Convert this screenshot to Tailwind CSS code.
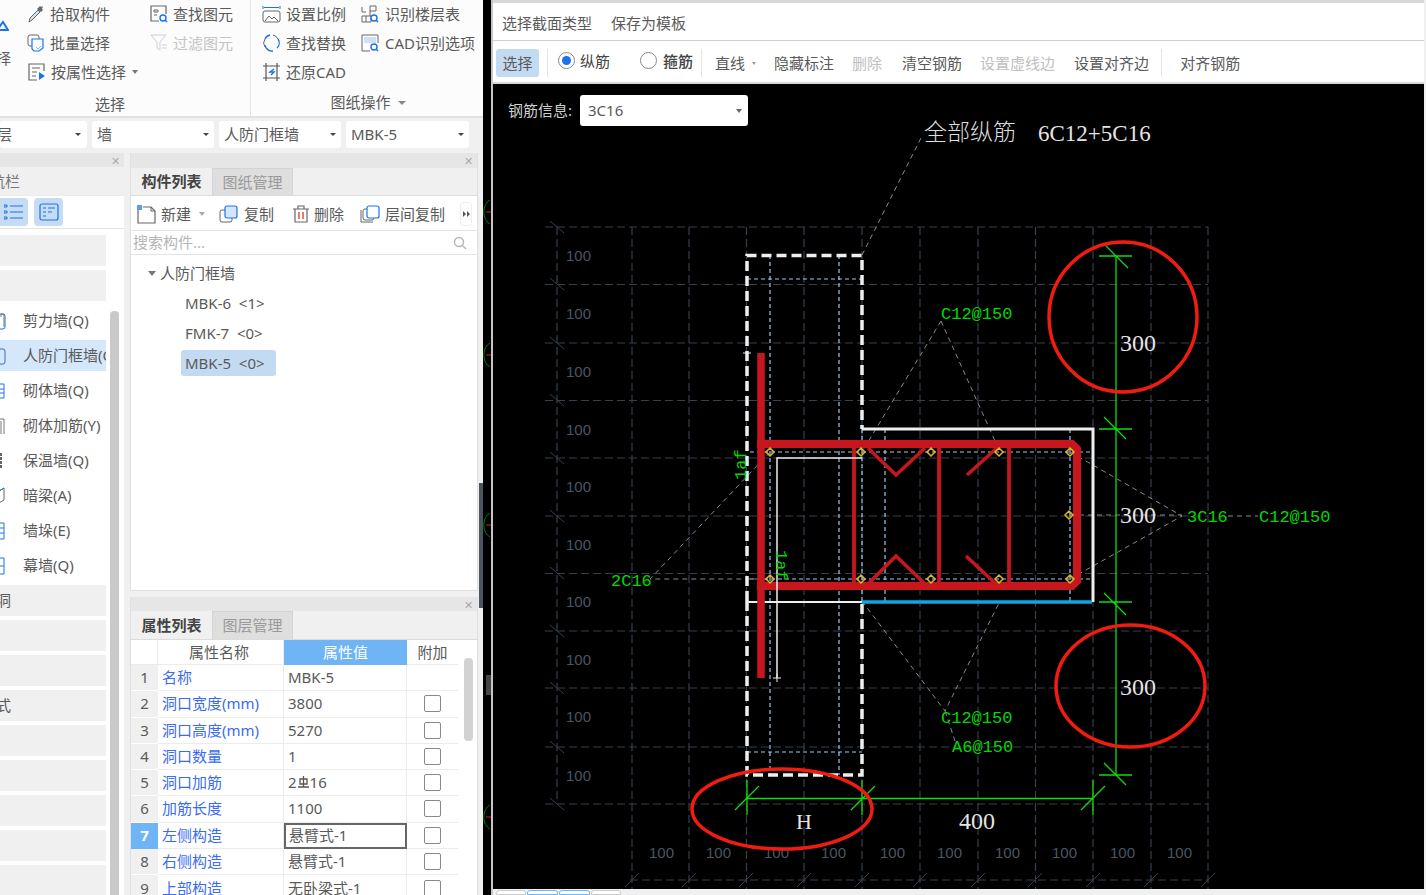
<!DOCTYPE html>
<html lang="zh-CN">
<head>
<meta charset="UTF-8">
<title>截面编辑</title>
<script src="https://cdn.jsdelivr.net/npm/@tailwindcss/browser@4"></script>
</head>
<body class="m-0 bg-[#f0f0f0] font-['Noto_Sans','Noto_Sans_CJK_SC',sans-serif] text-[15px] leading-none text-[#5a5a5a]">
<div class="flex h-[895px] w-[1426px] overflow-hidden">

  <!-- left: ribbon, combos, panels -->
  <div class="flex h-full w-[483px] shrink-0 flex-col">
    <!-- ribbon -->
    <div class="flex h-[118px] shrink-0 border-b-2 border-[#e2e2e2] bg-[#fcfcfc]">
      <div class="relative w-[251px] shrink-0 border-r border-[#e4e4e4]">
        <div class="flex h-[87px]">
          <div class="flex w-[27px] shrink-0 flex-col overflow-hidden pt-[20px]">
            <svg width="9" height="11" viewBox="0 0 9 11"><path d="M-3 10L3 2l5 8z" fill="none" stroke="#1a73e8" stroke-width="2"/></svg>
            <span class="mt-[20px] -ml-[4px]">择</span>
          </div>
          <div class="flex w-[123px] shrink-0 flex-col gap-[11px] pt-[5px]">
            <div class="flex h-[18px] items-center gap-[5px]">
              <svg width="18" height="20" viewBox="0 0 18 20"><path d="M2 18l1-4 8-8 2 2-8 8z" fill="#cfe0f4" stroke="#666"/><path d="M10 5l3-3 1 1 2-1-1 3 1 1-2 2z" fill="#666"/></svg>
              <span>拾取构件</span>
            </div>
            <div class="flex h-[18px] items-center gap-[5px]">
              <svg width="18" height="20" viewBox="0 0 18 20"><rect x="1" y="2" width="11" height="11" rx="2" fill="none" stroke="#666"/><path d="M5 6h11v9l-4 3H7l-2-2z" fill="#fff" stroke="#1a73e8" stroke-width="1.2"/><path d="M9 14l2 2 3-3" fill="none" stroke="#8ab8ee"/></svg>
              <span>批量选择</span>
            </div>
            <div class="flex h-[18px] items-center gap-[5px]">
              <svg width="19" height="20" viewBox="0 0 19 20"><path d="M10 18H2V2h15v7" fill="none" stroke="#666" stroke-width="1.2"/><path d="M5 6h8M5 10h5M5 14h4" stroke="#666"/><path d="M12 10l6 4-6 4z" fill="#1a73e8"/></svg>
              <span>按属性选择</span>
              <span class="ml-[1px] h-0 w-0 border-x-[3px] border-t-[4px] border-x-transparent border-t-[#777]"></span>
            </div>
          </div>
          <div class="flex flex-col gap-[11px] pt-[5px]">
            <div class="flex h-[18px] items-center gap-[5px]">
              <svg width="18" height="20" viewBox="0 0 18 20"><path d="M9 17H1V2h15v8" fill="none" stroke="#666" stroke-width="1.2"/><path d="M4 6h4v2H4zM4 11h3" fill="none" stroke="#666"/><circle cx="13" cy="14" r="3" fill="none" stroke="#1a73e8" stroke-width="1.4"/><path d="M15 16l2 2" stroke="#1a73e8" stroke-width="1.4"/></svg>
              <span>查找图元</span>
            </div>
            <div class="flex h-[18px] items-center gap-[5px] text-[#c4c4c4]">
              <svg width="18" height="20" viewBox="0 0 18 20"><path d="M1 2h15l-6 7v8l-3-2V9z" fill="none" stroke="#d0d0d0"/><path d="M12 12h5M12 15h5" stroke="#d0d0d0"/></svg>
              <span>过滤图元</span>
            </div>
          </div>
        </div>
        <div class="pt-[9px] text-center">
          <span class="relative -left-[15px] top-[1px]">选择</span>
        </div>
      </div>
      <div class="w-[231px] shrink-0 pl-[11px]">
        <div class="flex h-[87px]">
          <div class="flex w-[99px] shrink-0 flex-col gap-[11px] pt-[5px]">
            <div class="flex h-[18px] items-center gap-[5px]">
              <svg width="19" height="20" viewBox="0 0 19 20"><path d="M1 2v3M18 2v3M2 3.500h15" stroke="#1a73e8"/><rect x="1" y="7" width="17" height="11" rx="2" fill="none" stroke="#666"/><path d="M3 17l4-5 3 3 2-2 4 4" fill="none" stroke="#666"/></svg>
              <span>设置比例</span>
            </div>
            <div class="flex h-[18px] items-center gap-[5px]">
              <svg width="19" height="20" viewBox="0 0 19 20"><path d="M3 6a7 7 0 0 1 5-4M16 6a7 7 0 0 1-1 9M11 18a7 7 0 0 1-8-6" fill="none" stroke="#1a73e8" stroke-width="1.4"/><path d="M3 14a7 7 0 0 1 0-8M11 2a7 7 0 0 1 5 4" fill="none" stroke="#666"/></svg>
              <span>查找替换</span>
            </div>
            <div class="flex h-[18px] items-center gap-[5px]">
              <svg width="19" height="20" viewBox="0 0 19 20"><path d="M4 1v18M15 1v18M1 4h17M1 16h17" stroke="#555" stroke-width="1.2"/><path d="M12 7l-4 3h4l-3 3" fill="none" stroke="#1a73e8" stroke-width="1.4"/></svg>
              <span>还原CAD</span>
            </div>
          </div>
          <div class="flex flex-col gap-[11px] pt-[5px]">
            <div class="flex h-[18px] items-center gap-[6px]">
              <svg width="18" height="20" viewBox="0 0 18 20"><path d="M1 3v5h4M9 2h6v5H9zM1 12h9v6H1zM5 12v6M9 7v5" fill="none" stroke="#666"/><circle cx="13" cy="14" r="3" fill="#fff" stroke="#1a73e8" stroke-width="1.4"/><path d="M15 16l2 2" stroke="#1a73e8" stroke-width="1.4"/></svg>
              <span>识别楼层表</span>
            </div>
            <div class="flex h-[18px] items-center gap-[6px] whitespace-nowrap">
              <svg width="18" height="20" viewBox="0 0 18 20"><path d="M9 18H1V2h16v8" fill="none" stroke="#666"/><rect x="3" y="4" width="12" height="6" fill="#cfe0f4"/><circle cx="13" cy="14" r="3" fill="#fff" stroke="#1a73e8" stroke-width="1.4"/><path d="M15 16l2 2" stroke="#1a73e8" stroke-width="1.4"/></svg>
              <span>CAD识别选项</span>
            </div>
          </div>
        </div>
        <div class="flex items-center justify-center gap-[7px] pt-[8px] pr-[8px]">
          <span>图纸操作</span>
          <span class="h-0 w-0 border-x-[4px] border-t-[4px] border-x-transparent border-t-[#888]"></span>
        </div>
      </div>
    </div>

    <!-- combos -->
    <div class="flex h-[35px] shrink-0 items-center gap-[5px] pr-[13px] pb-[2px]">
      <div class="flex h-[27px] w-[87px] items-center justify-between rounded-[3px] bg-white pr-[6px]"><span class="-ml-[3px]">层</span><span class="h-0 w-0 border-x-[3px] border-t-[3px] border-x-transparent border-t-[#444]"></span></div>
      <div class="flex h-[27px] w-[122px] items-center justify-between rounded-[3px] bg-white px-[5px]"><span>墙</span><span class="h-0 w-0 border-x-[3px] border-t-[3px] border-x-transparent border-t-[#444]"></span></div>
      <div class="flex h-[27px] w-[122px] items-center justify-between rounded-[3px] bg-white px-[5px]"><span>人防门框墙</span><span class="h-0 w-0 border-x-[3px] border-t-[3px] border-x-transparent border-t-[#444]"></span></div>
      <div class="flex h-[27px] w-[123px] items-center justify-between rounded-[3px] bg-white px-[5px]"><span>MBK-5</span><span class="h-0 w-0 border-x-[3px] border-t-[3px] border-x-transparent border-t-[#444]"></span></div>
    </div>

    <!-- panels -->
    <div class="flex min-h-0 flex-1">
      <!-- nav panel -->
      <div class="flex w-[124px] shrink-0 flex-col bg-white">
        <div class="flex h-[14px] shrink-0 items-center justify-end bg-[#e6e6e6] pr-[4px] text-[11px] text-[#aaa]">✕</div>
        <div class="flex h-[29px] shrink-0 items-center overflow-hidden border-b border-[#ececec] bg-[#f0f0f0]"><span class="-ml-[10px] text-[#777]">航栏</span></div>
        <div class="flex h-[33px] shrink-0 items-center gap-[6px] border-b border-[#e4e4e4] pl-0">
          <div class="flex h-[28px] w-[28px] items-center justify-center rounded-r-[4px] bg-[#c6dcf4]">
            <svg width="20" height="16" viewBox="0 0 20 16"><path d="M6 2h13M6 8h13M6 14h13" stroke="#1a73e8" stroke-width="1.2"/><path d="M0 1h3v2H0zM0 7h3v2H0zM0 13h3v2H0z" fill="none" stroke="#1a73e8"/></svg>
          </div>
          <div class="flex h-[28px] w-[29px] items-center justify-center rounded-[4px] bg-[#c6dcf4]">
            <svg width="20" height="18" viewBox="0 0 20 18"><rect x="1" y="1" width="18" height="16" rx="2" fill="none" stroke="#1a73e8" stroke-width="1.2"/><path d="M4 5h3M9 5h7M4 9h3M9 9h4M4 13h3" stroke="#1a73e8"/></svg>
          </div>
        </div>
        <div class="relative min-h-0 flex-1 overflow-hidden pt-[6px]">
          <div class="flex w-[106px] flex-col">
            <div class="mb-[4px] h-[31px] bg-[#f0f0f0]"></div>
            <div class="mb-[2px] h-[31px] bg-[#f0f0f0]"></div>
            <div class="flex h-[35px] items-center gap-[6px] pl-0"><svg class="-ml-[1px]" width="18" height="20" viewBox="0 0 18 20"><rect x="-8" y="3" width="14" height="15" rx="2" fill="none" stroke="#1a73e8"/><path d="M2 5V2h3v13" fill="none" stroke="#777" transform="translate(0 1)"/></svg><span>剪力墙(Q)</span></div>
            <div class="my-[2px] flex h-[31px] items-center gap-[6px] overflow-hidden bg-[#d5e7fb] pl-0 whitespace-nowrap"><svg class="-ml-[1px] shrink-0" width="18" height="20" viewBox="0 0 18 20"><rect x="-8" y="3" width="14" height="15" rx="2" fill="none" stroke="#3f6fa8"/></svg><span>人防门框墙(Q)</span></div>
            <div class="flex h-[35px] items-center gap-[6px]"><svg class="-ml-[1px]" width="18" height="20" viewBox="0 0 18 20"><path d="M0 3h5v14H0M0 8h5M0 12h5" fill="none" stroke="#1a73e8"/></svg><span>砌体墙(Q)</span></div>
            <div class="flex h-[35px] items-center gap-[6px] whitespace-nowrap"><svg class="-ml-[1px]" width="18" height="20" viewBox="0 0 18 20"><path d="M0 3h5v15M2 5v13" fill="none" stroke="#777"/></svg><span>砌体加筋(Y)</span></div>
            <div class="flex h-[35px] items-center gap-[6px]"><svg class="-ml-[1px]" width="18" height="20" viewBox="0 0 18 20"><path d="M2 2v16" fill="none" stroke="#666" stroke-dasharray="3 1" stroke-width="2"/></svg><span>保温墙(Q)</span></div>
            <div class="flex h-[35px] items-center gap-[6px]"><svg class="-ml-[1px]" width="18" height="20" viewBox="0 0 18 20"><path d="M0 5l5-3v12l-5 3" fill="none" stroke="#666"/><path d="M0 5l5-3" stroke="#1a73e8"/></svg><span>暗梁(A)</span></div>
            <div class="flex h-[35px] items-center gap-[6px]"><svg class="-ml-[1px]" width="18" height="20" viewBox="0 0 18 20"><path d="M0 2h5v16H0M0 7h5M0 12h5" fill="none" stroke="#1a73e8"/></svg><span>墙垛(E)</span></div>
            <div class="flex h-[35px] items-center gap-[6px]"><svg class="-ml-[1px]" width="18" height="20" viewBox="0 0 18 20"><path d="M0 2h5v16H0M0 10h5" fill="none" stroke="#1a73e8"/></svg><span>幕墙(Q)</span></div>
            <div class="mt-[2px] mb-[4px] flex h-[31px] items-center overflow-hidden bg-[#f0f0f0]"><span class="-ml-[4px]">洞</span></div>
            <div class="mb-[4px] h-[31px] bg-[#f0f0f0]"></div>
            <div class="mb-[4px] h-[31px] bg-[#f0f0f0]"></div>
            <div class="mb-[4px] flex h-[31px] items-center overflow-hidden bg-[#f0f0f0]"><span class="-ml-[4px]">式</span></div>
            <div class="mb-[4px] h-[31px] bg-[#f0f0f0]"></div>
            <div class="mb-[4px] h-[31px] bg-[#f0f0f0]"></div>
            <div class="mb-[4px] h-[31px] bg-[#f0f0f0]"></div>
            <div class="mb-[4px] h-[31px] bg-[#f0f0f0]"></div>
            <div class="h-[31px] bg-[#f0f0f0]"></div>
          </div>
          <div class="absolute top-[82px] bottom-0 left-[110px] w-[9px] rounded-t-[4px] bg-[#c9c9c9]"></div>
        </div>
      </div>
      <div class="w-[6px] shrink-0 bg-[#f0f0f0]"></div>

      <!-- list + property panels -->
      <div class="flex w-[348px] shrink-0 flex-col gap-[6px]">
        <div class="flex h-[438px] shrink-0 flex-col border-x border-b border-[#e0e0e0] bg-white">
          <div class="flex h-[15px] shrink-0 items-center justify-end bg-[#e6e6e6] pr-[4px] text-[11px] text-[#aaa]">✕</div>
          <div class="flex h-[28px] shrink-0 border-b border-[#dcdcdc] bg-[#f0f0f0]">
            <div class="flex w-[81px] items-center justify-center font-bold text-[#444]">构件列表</div>
            <div class="flex w-[81px] items-center justify-center border-x border-t border-[#d4d4d4] bg-[#dedede] text-[#9a9a9a]">图纸管理</div>
          </div>
          <div class="flex h-[35px] shrink-0 items-center border-b border-[#e4e4e4] pt-[2px] pl-[5px] whitespace-nowrap">
            <svg width="20" height="20" viewBox="0 0 20 20"><path d="M2 4v15h17V7l-4-4H7" fill="none" stroke="#666" stroke-width="1.2"/><path d="M15 3v4h4" fill="none" stroke="#666"/><rect x="1" y="1" width="5" height="5" fill="#5b9bec"/></svg>
            <span class="ml-[5px]">新建</span>
            <span class="ml-[8px] h-0 w-0 border-x-[3px] border-t-[4px] border-x-transparent border-t-[#aaa]"></span>
            <svg class="ml-[14px]" width="20" height="20" viewBox="0 0 20 20"><rect x="1" y="6" width="12" height="12" rx="2" fill="none" stroke="#666"/><rect x="6" y="2" width="12" height="12" rx="2" fill="#d5e6fa" stroke="#1a73e8" stroke-width="1.2"/></svg>
            <span class="ml-[5px]">复制</span>
            <svg class="ml-[18px]" width="18" height="20" viewBox="0 0 18 20"><path d="M3 5v13h12V5M1 5h16M6 5V2h6v3" fill="none" stroke="#666" stroke-width="1.2"/><path d="M7 8v7M11 8v7" stroke="#d8433a" stroke-width="1.4"/></svg>
            <span class="ml-[4px]">删除</span>
            <svg class="ml-[16px]" width="20" height="20" viewBox="0 0 20 20"><path d="M1 6v12h12" fill="none" stroke="#666"/><rect x="3" y="5" width="11" height="11" rx="2" fill="none" stroke="#666"/><rect x="7" y="2" width="12" height="12" rx="2" fill="#fff" stroke="#1a73e8" stroke-width="1.2"/></svg>
            <span class="ml-[5px]">层间复制</span>
            <div class="ml-[15px] flex h-[24px] w-[12px] items-center justify-center gap-[1px] rounded-[3px] border border-[#eee]">
              <span class="h-0 w-0 border-y-[3px] border-l-[3px] border-y-transparent border-l-[#555]"></span>
              <span class="h-0 w-0 border-y-[3px] border-l-[3px] border-y-transparent border-l-[#555]"></span>
            </div>
          </div>
          <div class="flex h-[24px] shrink-0 items-center justify-between border-b border-[#e4e4e4] pr-[10px] pl-[2px] text-[#b5b5b5]">
            <span>搜索构件...</span>
            <svg width="14" height="14" viewBox="0 0 14 14"><circle cx="6" cy="6" r="4.500" fill="none" stroke="#b5b5b5" stroke-width="1.4"/><path d="M9.500 9.500L13 13" stroke="#b5b5b5" stroke-width="1.4"/></svg>
          </div>
          <div class="flex flex-col pt-[3px] pl-[17px]">
            <div class="flex h-[30px] items-center gap-[4px]">
              <span class="h-0 w-0 border-x-[4px] border-t-[5px] border-x-transparent border-t-[#777]"></span>
              <span>人防门框墙</span>
            </div>
            <div class="flex h-[30px] items-center pl-[37px] whitespace-pre">MBK-6  &lt;1&gt;</div>
            <div class="flex h-[30px] items-center pl-[37px] whitespace-pre">FMK-7  &lt;0&gt;</div>
            <div class="mt-[2px] ml-[33px] flex h-[26px] w-[95px] items-center rounded-[3px] bg-[#c3daf3] pl-[4px] whitespace-pre">MBK-5  &lt;0&gt;</div>
          </div>
        </div>

        <div class="flex min-h-0 flex-1 flex-col border-x border-[#e0e0e0] bg-white">
          <div class="flex h-[14px] shrink-0 items-center justify-end bg-[#e6e6e6] pr-[4px] text-[11px] text-[#aaa]">✕</div>
          <div class="flex h-[29px] shrink-0 border-b border-[#dcdcdc] bg-[#f0f0f0]">
            <div class="flex w-[81px] items-center justify-center font-bold text-[#444]">属性列表</div>
            <div class="flex w-[81px] items-center justify-center border-x border-t border-[#d4d4d4] bg-[#dedede] text-[#9a9a9a]">图层管理</div>
          </div>
          <div class="relative min-h-0 flex-1 overflow-hidden">
            <div class="grid w-[327px] grid-cols-[27px_126px_123px_51px] grid-rows-[25px_repeat(9,26.25px)]">
              <div class="border-r border-b border-[#ececec]"></div>
              <div class="flex items-center justify-center border-r border-b border-[#ececec] pr-[3px]">属性名称</div>
              <div class="flex items-center justify-center bg-[#6fb4f5] text-white">属性值</div>
              <div class="flex items-center justify-center border-b border-[#ececec]">附加</div>

              <div class="flex items-center justify-center border-b border-[#fff] bg-[#f0f0f0]">1</div>
              <div class="flex items-center border-r border-b border-[#ececec] pl-[4px] text-[#3b6cf0]">名称</div>
              <div class="flex items-center border-r border-b border-[#ececec] pl-[4px]">MBK-5</div>
              <div class="border-b border-[#ececec]"></div>

              <div class="flex items-center justify-center border-b border-[#fff] bg-[#f0f0f0]">2</div>
              <div class="flex items-center border-r border-b border-[#ececec] pl-[4px] text-[#3b6cf0]">洞口宽度(mm)</div>
              <div class="flex items-center border-r border-b border-[#ececec] pl-[4px]">3800</div>
              <div class="flex items-center justify-center border-b border-[#ececec]"><span class="h-[17px] w-[17px] rounded-[2px] border border-[#888]"></span></div>

              <div class="flex items-center justify-center border-b border-[#fff] bg-[#f0f0f0]">3</div>
              <div class="flex items-center border-r border-b border-[#ececec] pl-[4px] text-[#3b6cf0]">洞口高度(mm)</div>
              <div class="flex items-center border-r border-b border-[#ececec] pl-[4px]">5270</div>
              <div class="flex items-center justify-center border-b border-[#ececec]"><span class="h-[17px] w-[17px] rounded-[2px] border border-[#888]"></span></div>

              <div class="flex items-center justify-center border-b border-[#fff] bg-[#f0f0f0]">4</div>
              <div class="flex items-center border-r border-b border-[#ececec] pl-[4px] text-[#3b6cf0]">洞口数量</div>
              <div class="flex items-center border-r border-b border-[#ececec] pl-[4px]">1</div>
              <div class="flex items-center justify-center border-b border-[#ececec]"><span class="h-[17px] w-[17px] rounded-[2px] border border-[#888]"></span></div>

              <div class="flex items-center justify-center border-b border-[#fff] bg-[#f0f0f0]">5</div>
              <div class="flex items-center border-r border-b border-[#ececec] pl-[4px] text-[#3b6cf0]">洞口加筋</div>
              <div class="flex items-center border-r border-b border-[#ececec] pl-[4px]">2<svg class="mx-[1px]" width="11" height="13" viewBox="0 0 11 13"><path d="M5.500 0v11M0 11h11M2 3h7v5H2z" fill="none" stroke="#555" stroke-width="1.3"/></svg>16</div>
              <div class="flex items-center justify-center border-b border-[#ececec]"><span class="h-[17px] w-[17px] rounded-[2px] border border-[#888]"></span></div>

              <div class="flex items-center justify-center border-b border-[#fff] bg-[#f0f0f0]">6</div>
              <div class="flex items-center border-r border-b border-[#ececec] pl-[4px] text-[#3b6cf0]">加筋长度</div>
              <div class="flex items-center border-r border-b border-[#ececec] pl-[4px]">1100</div>
              <div class="flex items-center justify-center border-b border-[#ececec]"><span class="h-[17px] w-[17px] rounded-[2px] border border-[#888]"></span></div>

              <div class="flex items-center justify-center bg-[#6fb4f5] font-bold text-white">7</div>
              <div class="flex items-center border-r border-b border-[#ececec] pl-[4px] text-[#3b6cf0]">左侧构造</div>
              <div class="flex items-center border-2 border-[#666] pl-[3px]">悬臂式-1</div>
              <div class="flex items-center justify-center border-b border-[#ececec]"><span class="h-[17px] w-[17px] rounded-[2px] border border-[#888]"></span></div>

              <div class="flex items-center justify-center border-b border-[#fff] bg-[#f0f0f0]">8</div>
              <div class="flex items-center border-r border-b border-[#ececec] pl-[4px] text-[#3b6cf0]">右侧构造</div>
              <div class="flex items-center border-r border-b border-[#ececec] pl-[4px]">悬臂式-1</div>
              <div class="flex items-center justify-center border-b border-[#ececec]"><span class="h-[17px] w-[17px] rounded-[2px] border border-[#888]"></span></div>

              <div class="flex items-center justify-center bg-[#f0f0f0]">9</div>
              <div class="flex items-center border-r border-[#ececec] pl-[4px] text-[#3b6cf0]">上部构造</div>
              <div class="flex items-center border-r border-[#ececec] pl-[4px]">无卧梁式-1</div>
              <div class="flex items-center justify-center"><span class="h-[17px] w-[17px] rounded-[2px] border border-[#888]"></span></div>
            </div>
            <div class="absolute top-[18px] left-[333px] h-[83px] w-[9px] rounded-[4px] bg-[#d2d2d2]"></div>
          </div>
        </div>
      </div>
      <div class="relative w-[5px] shrink-0 bg-[#f0f0f0]">
        <div class="absolute top-[330px] right-0 h-[125px] w-[4px] bg-[#4a5560]"></div>
      </div>
    </div>
  </div>

  <!-- dark gap with drawing fragments -->
  <div class="relative h-full w-[8px] shrink-0 bg-black">
    <svg class="absolute top-0 left-0" width="8" height="895" viewBox="0 0 8 895">
      <path d="M7 200a10 13 0 0 0 0 24M7 343a10 13 0 0 0 0 24M7 513a10 13 0 0 0 0 24M7 805a10 13 0 0 0 0 24" fill="none" stroke="#0a7a0a"/>
      <path d="M3 212h5M3 355h5M3 525h5M3 817h5" stroke="#d02020"/>
    </svg>
    <div class="absolute top-[675px] left-[3px] h-[20px] w-[5px] bg-[#444]"></div>
  </div>

  <!-- right: section editor -->
  <div class="flex h-full min-w-0 flex-1 flex-col border-l-[2px] border-[#c6c6c6] bg-[#f0f0f0] pr-[2px]">
    <div class="h-[3px] shrink-0 bg-[#d8d8d8]"></div>
    <div class="flex h-[37px] shrink-0 items-center gap-[19px] bg-white pt-[4px] pl-[9px]">
      <span>选择截面类型</span>
      <span>保存为模板</span>
    </div>
    <div class="h-[1px] shrink-0 bg-[#cfcfcf]"></div>
    <div class="flex h-[41px] shrink-0 items-center bg-white pt-[3px] pl-[3px] whitespace-nowrap">
      <div class="flex h-[28px] w-[43px] items-center justify-center rounded-[3px] bg-[#c3daf3]">选择</div>
      <div class="mx-[8px] h-[28px] w-[1px] bg-[#e4e4e4]"></div>
      <span class="ml-[2px] flex h-[17px] w-[17px] -translate-y-[3px] items-center justify-center rounded-full border border-[#888]"><span class="h-[9px] w-[9px] rounded-full bg-[#1a73e8]"></span></span>
      <span class="ml-[5px] -translate-y-[2px] text-[#444]">纵筋</span>
      <span class="ml-[30px] h-[17px] w-[17px] -translate-y-[3px] rounded-full border border-[#888]"></span>
      <span class="ml-[6px] -translate-y-[2px] font-medium text-[#444]">箍筋</span>
      <div class="mx-[8px] h-[28px] w-[1px] bg-[#e4e4e4]"></div>
      <span class="ml-[5px]">直线</span>
      <span class="mr-[18px] ml-[7px] h-0 w-0 border-x-[2px] border-t-[3px] border-x-transparent border-t-[#999]"></span>
      <span>隐藏标注</span>
      <span class="ml-[18px] text-[#c0c0c0]">删除</span>
      <span class="ml-[20px]">清空钢筋</span>
      <span class="ml-[18px] text-[#c0c0c0]">设置虚线边</span>
      <span class="ml-[19px]">设置对齐边</span>
      <div class="ml-[12px] h-[28px] w-[1px] bg-[#e4e4e4]"></div>
      <span class="ml-[18px]">对齐钢筋</span>
    </div>
    <div class="h-[2px] shrink-0 bg-[#d8d8d8]"></div>
    <div class="relative min-h-0 flex-1 overflow-hidden bg-black">
      <svg class="absolute top-0 left-0" width="931" height="806" viewBox="493 83 931 806">
        <!-- grid -->
        <path d="M557 226V803M632 226V889M689 226V889M746.500 226V889M804 226V889M862 226V889M920 226V889M978 226V889M1035.500 226V889M1093 226V889M1151 226V889M1208 226V889M545 226H1208M545 283.500H1208M545 342H1208M545 399.500H1208M545 457H1208M545 515H1208M545 572.500H1208M545 630H1208M545 687H1208M545 746H1208M545 803H1208M630 879H1208" fill="none" stroke="#36404c" stroke-width="1.200" stroke-dasharray="8 4"/>
        <path d="M550 220l14 12M550 277l14 12M550 336l14 12M550 393l14 12M550 451l14 12M550 509l14 12M550 566l14 12M550 624l14 12M550 681l14 12M550 740l14 12M550 797l14 12M625 886l14-14M682 886l14-14M739 886l14-14M797 886l14-14M855 886l14-14M913 886l14-14M971 886l14-14M1028 886l14-14M1086 886l14-14M1144 886l14-14M1201 886l14-14" fill="none" stroke="#36404c"/>
        <g fill="#4b5563" font-family="'Liberation Sans',sans-serif" font-size="15">
          <text x="566" y="260">100</text><text x="566" y="318">100</text><text x="566" y="376">100</text><text x="566" y="434">100</text><text x="566" y="491">100</text><text x="566" y="549">100</text><text x="566" y="606">100</text><text x="566" y="664">100</text><text x="566" y="721">100</text><text x="566" y="780">100</text>
          <text x="649" y="857">100</text><text x="706" y="857">100</text><text x="764" y="857">100</text><text x="821" y="857">100</text><text x="880" y="857">100</text><text x="937" y="857">100</text><text x="995" y="857">100</text><text x="1052" y="857">100</text><text x="1110" y="857">100</text><text x="1167" y="857">100</text>
        </g>
        <!-- stirrup guide lines -->
        <path d="M770 254V774M839 254V774M747 278H862M747 751H862M750 451H1090M750 578H1090M862 428V600M885 428V600M1070 428V600" fill="none" stroke="#9ccaf0" stroke-width="1.200" stroke-dasharray="4 3"/>
        <!-- leaders -->
        <path d="M862 254L922 135M770 451L650 578H770M941 320L862 451M941 320L1000 451M862 600L945 710L1000 600M945 710L955 740M1070 451L1182 515M1070 578L1182 515M1070 514H1182M1228 515H1258" fill="none" stroke="#8a8a8a" stroke-dasharray="5 4"/>
        <!-- column outline -->
        <path d="M747 600V254.500H862V428M747 600V774H862V600" fill="none" stroke="#eee" stroke-width="3.500" stroke-dasharray="10 5"/>
        <path d="M862 428H1093V601" fill="none" stroke="#eee" stroke-width="3"/>
        <path d="M748 601H862" stroke="#eee" stroke-width="2"/>
        <path d="M862 601H1092" stroke="#10a5e4" stroke-width="3.500"/>
        <!-- rebar -->
        <path d="M761 352V677" stroke="#c8161f" stroke-width="7.500"/>
        <path d="M757 443H1072L1077 448V580L1072 585H757" fill="none" stroke="#c8161f" stroke-width="8"/>
        <path d="M854 445V583M939 445V583M1009 445V583" stroke="#c8161f" stroke-width="3.800"/>
        <path d="M868 447L896 474L925 447M967 474L997 447M868 583L896 555L925 583M966 555L996 583" fill="none" stroke="#c8161f" stroke-width="3.500"/>
        <path d="M862 457H777V677" fill="none" stroke="#eee" stroke-width="1.500"/>
        <path d="M773 677h8M777 673v8M743 352h8" stroke="#eee"/>
        <g fill="none" stroke="#d9b92a" stroke-width="1.500">
          <path d="M770 447l4 4-4 4-4-4zM861 447l4 4-4 4-4-4zM931 447l4 4-4 4-4-4zM999 447l4 4-4 4-4-4zM1070 447l4 4-4 4-4-4zM1069 510l4 4-4 4-4-4zM770 574l4 4-4 4-4-4zM861 574l4 4-4 4-4-4zM931 574l4 4-4 4-4-4zM999 574l4 4-4 4-4-4zM1070 574l4 4-4 4-4-4z"/>
        </g>
        <!-- dimensions -->
        <path d="M1116 255V774M1099 255h33M1099 428h33M1099 601h33M1099 774h33M1106 245l22 22M1104 416l22 22M1104 592l22 22M1104 762l22 22M747 797.500H1093M747 779v35M862 779v35M1093 779v35M735 809l24-24M851 809l24-24M1081 809l24-24" fill="none" stroke="#0fdc0f" stroke-width="1.300"/>
        <!-- labels -->
        <g fill="#00d800" font-family="'Liberation Mono',monospace" font-size="17">
          <text x="941" y="318">C12@150</text>
          <text x="941" y="722">C12@150</text>
          <text x="952" y="751">A6@150</text>
          <text x="611" y="585">2C16</text>
          <text x="1187" y="521">3C16</text>
          <text x="1259" y="521">C12@150</text>
          <text transform="translate(746 479) rotate(-90)">1af</text>
          <text transform="translate(776 549) rotate(90)">1af</text>
        </g>
        <g fill="#e4e4e4" font-family="'Liberation Serif',serif" font-size="24">
          <text x="1120" y="350">300</text>
          <text x="1120" y="522">300</text>
          <text x="1120" y="694">300</text>
          <text x="959" y="828">400</text>
          <text x="796" y="828" font-size="22">H</text>
          <text x="1038" y="140" font-size="23">6C12+5C16</text>
        </g>
        <text x="924" y="139" fill="#ddd" font-family="'Noto Sans CJK SC',sans-serif" font-size="23" font-weight="300">全部纵筋</text>
        <!-- hand drawn marks -->
        <g fill="none" stroke="#f01c10" stroke-width="3.500">
          <ellipse cx="1123" cy="316" rx="74" ry="75"/>
          <ellipse cx="1130.500" cy="685" rx="74.500" ry="61"/>
          <ellipse cx="782" cy="808" rx="90" ry="40"/>
        </g>
      </svg>
      <!-- rebar info combo over the canvas -->
      <div class="absolute top-[11px] left-[15px] flex items-center gap-[8px]">
        <span class="text-[#cfcfcf]">钢筋信息:</span>
        <div class="flex h-[31px] w-[168px] items-center justify-between rounded-[3px] bg-white pr-[6px] pl-[8px]">
          <span>3C16</span>
          <span class="h-0 w-0 border-x-[3px] border-t-[4px] border-x-transparent border-t-[#666]"></span>
        </div>
      </div>
    </div>
    <div class="flex h-[6px] shrink-0 gap-[1px] bg-[#f0f0f0] pt-[1px] pl-[3px]">
      <span class="w-[30px] rounded-t-[3px] border border-[#ccc] bg-white"></span>
      <span class="w-[31px] rounded-t-[3px] border border-[#6fb4f5] bg-white"></span>
      <span class="w-[31px] rounded-t-[3px] border border-[#6fb4f5] bg-white"></span>
      <span class="w-[30px] rounded-t-[3px] border border-[#ccc] bg-white"></span>
    </div>
  </div>
</div>
</body>
</html>
